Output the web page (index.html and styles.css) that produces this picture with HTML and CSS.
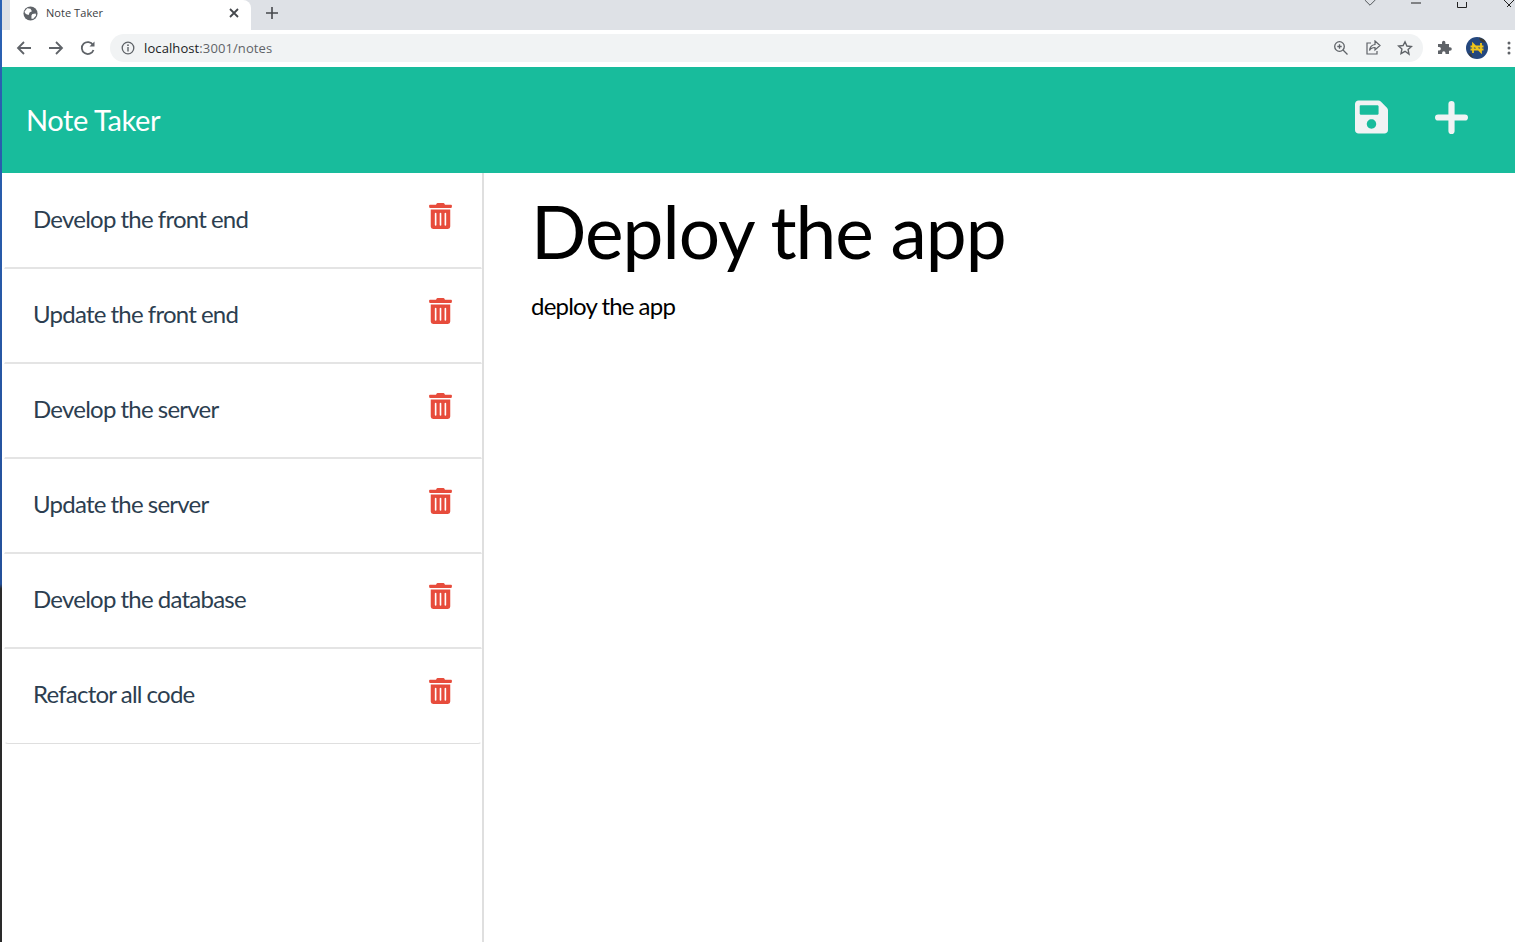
FILE: index.html
```html
<!DOCTYPE html>
<html lang="en">
<head>
<meta charset="utf-8">
<title>Note Taker</title>
<link rel="stylesheet" href="styles.css">
</head>
<body>
<div class="edge"></div>
<div class="window">
  <div class="tabstrip">
    <div class="tab">
      <svg class="favicon" viewBox="0 0 16 16"><circle cx="8" cy="8" r="7.500" fill="#5f6368"/><path d="M4.500 2.500l3.500.5 1.500 2.500-2.500 1.500-1 2.500-3-1L1.500 6zM10 8.500l3.500-.5.5 2-3 3.500-2 0 0-3.500z" fill="#fff"/></svg>
      <span class="tab-title">Note Taker</span>
      <svg class="tab-close" viewBox="0 0 10 10"><path d="M1 1l8 8M9 1l-8 8" stroke="#45484c" stroke-width="1.800" fill="none"/></svg>
    </div>
    <svg class="newtab" viewBox="0 0 12 12"><path d="M6 0v12M0 6h12" stroke="#45484c" stroke-width="1.600" fill="none"/></svg>
    <div class="winctl">
      <svg class="ctl-chev" viewBox="0 0 14 8"><path d="M1 0l6 6 6-6" stroke="#3c4043" fill="none"/></svg>
      <svg class="ctl-min" viewBox="0 0 10 6"><path d="M0 3h10" stroke="#222" fill="none"/></svg>
      <svg class="ctl-max" viewBox="0 0 10 6"><path d="M.5 0v5.500h9V0" stroke="#222" fill="none"/></svg>
      <svg class="ctl-close" viewBox="0 0 12 8"><path d="M1 0l7 7M11 0L4 7" stroke="#222" fill="none"/></svg>
    </div>
  </div>
  <div class="toolbar">
    <svg class="nav" viewBox="0 0 16 16"><path d="M15 8H2M8 2L2 8l6 6" stroke="#5f6368" stroke-width="1.800" fill="none"/></svg>
    <svg class="nav" viewBox="0 0 16 16"><path d="M1 8h13M8 2l6 6-6 6" stroke="#5f6368" stroke-width="1.800" fill="none"/></svg>
    <svg class="nav" viewBox="0 0 16 16"><path d="M13.500 10a6 6 0 1 1-.5-5" stroke="#5f6368" stroke-width="1.800" fill="none"/><path d="M14.500 1.500v5h-5z" fill="#5f6368"/></svg>
    <div class="omnibox">
      <svg class="info" viewBox="0 0 14 14"><circle cx="7" cy="7" r="5.800" stroke="#5f6368" stroke-width="1.300" fill="none"/><path d="M7 6v4.500" stroke="#5f6368" stroke-width="1.400"/><circle cx="7" cy="4.200" r=".9" fill="#5f6368"/></svg>
      <span class="url"><span class="url-host">localhost</span>:3001/notes</span>
      <span class="omni-fill"></span>
      <svg class="omni-icon" viewBox="0 0 16 16"><circle cx="6.500" cy="6.500" r="4.800" stroke="#5f6368" stroke-width="1.300" fill="none"/><path d="M10 10l4.500 4.500M4.300 6.500h4.400M6.500 4.300v4.400" stroke="#5f6368" stroke-width="1.300" fill="none"/></svg>
      <svg class="omni-icon" viewBox="0 0 16 16"><path d="M6 3H2v11h10v-3" stroke="#5f6368" stroke-width="1.200" fill="none"/><path d="M10 1l5 4.500-5 4.500V7.500c-3 0-4.500 1-5.500 3 .3-3.500 2-5.500 5.500-6z" stroke="#5f6368" stroke-width="1.200" fill="none"/></svg>
      <svg class="omni-icon" viewBox="0 0 16 16"><path d="M8 1.800l1.900 4.200 4.600.5-3.400 3.100.9 4.500L8 11.300 4 13.600l.9-4.500L1.500 6l4.600-.5z" stroke="#5f6368" stroke-width="1.400" fill="none"/></svg>
    </div>
    <svg class="ext" viewBox="0 0 16 16"><path d="M6 2.500a1.700 1.700 0 0 1 3.400 0V4h3.600v3.200h1a1.800 1.800 0 0 1 0 3.600h-1V14H9.500v-1a1.700 1.700 0 0 0-3.400 0v1H2v-3.500h1.200a1.700 1.700 0 0 0 0-3.400H2V4h4z" fill="#5f6368"/></svg>
    <svg class="avatar" viewBox="0 0 22 22"><circle cx="11" cy="11" r="11" fill="#24477e"/><path d="M13 0.500l5 2 2 3-3 0-3-2zM2 16l3 1 2 4-3-2z" fill="#3a3a34"/><path d="M7 16V7l8 8V6M4.500 9.500h13M4.500 12.500h13" stroke="#f0c419" stroke-width="1.800" fill="none"/></svg>
    <svg class="menu" viewBox="0 0 4 16"><circle cx="2" cy="3" r="1.500" fill="#5f6368"/><circle cx="2" cy="8" r="1.500" fill="#5f6368"/><circle cx="2" cy="13" r="1.500" fill="#5f6368"/></svg>
  </div>
  <header class="navbar">
    <a class="brand">Note Taker</a>
    <div class="nav-actions">
      <svg class="save-icon" viewBox="0 0 448 512"><path fill="#f1f3f4" d="M433.900 129.900l-83.900-83.900A48 48 0 0 0 316.100 32H48C21.500 32 0 53.500 0 80v352c0 26.500 21.500 48 48 48h352c26.500 0 48-21.500 48-48V163.900a48 48 0 0 0-14.100-34zM224 416c-35.300 0-64-28.700-64-64 0-35.300 28.700-64 64-64s64 28.700 64 64c0 35.300-28.700 64-64 64zm96-304.500V212c0 6.600-5.400 12-12 12H76c-6.600 0-12-5.400-12-12V108c0-6.600 5.400-12 12-12h228.500c3.200 0 6.200 1.300 8.500 3.500l3.500 3.500c2.200 2.200 3.500 5.300 3.500 8.500z"/></svg>
      <svg class="plus-icon" viewBox="0 0 32 32"><path d="M16 3v26M3 16h26" stroke="#f1f3f4" stroke-width="6" stroke-linecap="round" fill="none"/></svg>
    </div>
  </header>
  <main class="content">
    <aside class="sidebar">
      <ul class="notes">
        <li class="note"><span>Develop the front end</span><svg class="trash" viewBox="0 0 448 512"><path fill="#e74c3c" d="M32 464a48 48 0 0 0 48 48h288a48 48 0 0 0 48-48V128H32zm272-256a16 16 0 0 1 32 0v224a16 16 0 0 1-32 0zm-96 0a16 16 0 0 1 32 0v224a16 16 0 0 1-32 0zm-96 0a16 16 0 0 1 32 0v224a16 16 0 0 1-32 0zM432 32H312l-9.400-18.700A24 24 0 0 0 281.100 0H166.800a23.700 23.700 0 0 0-21.400 13.300L136 32H16A16 16 0 0 0 0 48v32a16 16 0 0 0 16 16h416a16 16 0 0 0 16-16V48a16 16 0 0 0-16-16z"/></svg></li>
        <li class="note"><span>Update the front end</span><svg class="trash" viewBox="0 0 448 512"><path fill="#e74c3c" d="M32 464a48 48 0 0 0 48 48h288a48 48 0 0 0 48-48V128H32zm272-256a16 16 0 0 1 32 0v224a16 16 0 0 1-32 0zm-96 0a16 16 0 0 1 32 0v224a16 16 0 0 1-32 0zm-96 0a16 16 0 0 1 32 0v224a16 16 0 0 1-32 0zM432 32H312l-9.400-18.700A24 24 0 0 0 281.100 0H166.800a23.700 23.700 0 0 0-21.400 13.300L136 32H16A16 16 0 0 0 0 48v32a16 16 0 0 0 16 16h416a16 16 0 0 0 16-16V48a16 16 0 0 0-16-16z"/></svg></li>
        <li class="note"><span>Develop the server</span><svg class="trash" viewBox="0 0 448 512"><path fill="#e74c3c" d="M32 464a48 48 0 0 0 48 48h288a48 48 0 0 0 48-48V128H32zm272-256a16 16 0 0 1 32 0v224a16 16 0 0 1-32 0zm-96 0a16 16 0 0 1 32 0v224a16 16 0 0 1-32 0zm-96 0a16 16 0 0 1 32 0v224a16 16 0 0 1-32 0zM432 32H312l-9.400-18.700A24 24 0 0 0 281.100 0H166.800a23.700 23.700 0 0 0-21.400 13.300L136 32H16A16 16 0 0 0 0 48v32a16 16 0 0 0 16 16h416a16 16 0 0 0 16-16V48a16 16 0 0 0-16-16z"/></svg></li>
        <li class="note"><span>Update the server</span><svg class="trash" viewBox="0 0 448 512"><path fill="#e74c3c" d="M32 464a48 48 0 0 0 48 48h288a48 48 0 0 0 48-48V128H32zm272-256a16 16 0 0 1 32 0v224a16 16 0 0 1-32 0zm-96 0a16 16 0 0 1 32 0v224a16 16 0 0 1-32 0zm-96 0a16 16 0 0 1 32 0v224a16 16 0 0 1-32 0zM432 32H312l-9.400-18.700A24 24 0 0 0 281.100 0H166.800a23.700 23.700 0 0 0-21.400 13.300L136 32H16A16 16 0 0 0 0 48v32a16 16 0 0 0 16 16h416a16 16 0 0 0 16-16V48a16 16 0 0 0-16-16z"/></svg></li>
        <li class="note"><span>Develop the database</span><svg class="trash" viewBox="0 0 448 512"><path fill="#e74c3c" d="M32 464a48 48 0 0 0 48 48h288a48 48 0 0 0 48-48V128H32zm272-256a16 16 0 0 1 32 0v224a16 16 0 0 1-32 0zm-96 0a16 16 0 0 1 32 0v224a16 16 0 0 1-32 0zm-96 0a16 16 0 0 1 32 0v224a16 16 0 0 1-32 0zM432 32H312l-9.400-18.700A24 24 0 0 0 281.100 0H166.800a23.700 23.700 0 0 0-21.400 13.300L136 32H16A16 16 0 0 0 0 48v32a16 16 0 0 0 16 16h416a16 16 0 0 0 16-16V48a16 16 0 0 0-16-16z"/></svg></li>
        <li class="note"><span>Refactor all code</span><svg class="trash" viewBox="0 0 448 512"><path fill="#e74c3c" d="M32 464a48 48 0 0 0 48 48h288a48 48 0 0 0 48-48V128H32zm272-256a16 16 0 0 1 32 0v224a16 16 0 0 1-32 0zm-96 0a16 16 0 0 1 32 0v224a16 16 0 0 1-32 0zm-96 0a16 16 0 0 1 32 0v224a16 16 0 0 1-32 0zM432 32H312l-9.400-18.700A24 24 0 0 0 281.100 0H166.800a23.700 23.700 0 0 0-21.400 13.300L136 32H16A16 16 0 0 0 0 48v32a16 16 0 0 0 16 16h416a16 16 0 0 0 16-16V48a16 16 0 0 0-16-16z"/></svg></li>
      </ul>
    </aside>
    <section class="editor">
      <h1 class="note-title">Deploy the app</h1>
      <p class="note-text">deploy the app</p>
    </section>
  </main>
</div>
</body>
</html>
```
FILE: styles.css
```css
* { box-sizing: border-box; }
html, body { margin: 0; height: 100%; overflow: hidden; }
body { display: flex; background: #fff; font-family: Lato, sans-serif; color: #212529; }
.edge { width: 2px; flex: none; background: linear-gradient(#2b62b4 0, #24509a 62%, #2a2a2a 62.5%, #2a2a2a 100%); }
.window { flex: 1; min-width: 0; display: flex; flex-direction: column; height: 942px; }

.tabstrip { height: 30px; flex: none; background: #dee1e6; display: flex; align-items: center; }
.tab { margin-left: 8px; width: 241px; height: 30px; background: #fff; border-top-right-radius: 8px; display: flex; align-items: center; padding: 0 10px 4px 13px; }
.favicon { width: 15px; height: 15px; flex: none; }
.tab-title { margin: 0 0 2px 8px; font: 11px "Open Sans", sans-serif; color: #3c4043; flex: 1; letter-spacing: .05px; }
.tab-close { width: 10px; height: 10px; flex: none; margin-right: 2px; }
.newtab { width: 12px; height: 12px; margin-left: 15px; margin-top: -4px; flex: none; }
.winctl { margin-left: auto; height: 30px; display: flex; align-items: flex-start; }
.ctl-chev { width: 12px; height: 7px; margin-right: 35px; }
.ctl-min { width: 10px; height: 6px; margin-right: 36px; }
.ctl-max { width: 10px; height: 6px; margin-right: 36px; margin-top: 2px; }
.ctl-close { width: 12px; height: 8px; }

.toolbar { height: 37px; flex: none; background: #fff; display: flex; align-items: center; padding-left: 14px; padding-bottom: 1px; }
.nav { width: 16px; height: 16px; flex: none; margin-right: 16px; }
.omnibox { margin-left: -2px; width: 1313px; height: 28px; border-radius: 14px; background: #f1f3f4; display: flex; align-items: center; padding: 0 10px 0 11px; flex: none; }
.info { width: 14px; height: 14px; flex: none; }
.url { margin-left: 9px; font: 13px "Open Sans", sans-serif; color: #5f6368; letter-spacing: .1px; }
.url-host { color: #202124; }
.omni-fill { flex: 1; }
.omni-icon { width: 16px; height: 16px; flex: none; margin-left: 16px; }
.ext { width: 16px; height: 16px; flex: none; margin-left: 13px; }
.avatar { width: 22px; height: 22px; flex: none; margin-left: 14px; }
.menu { width: 4px; height: 16px; flex: none; margin-left: 19px; }

.navbar { height: 106px; flex: none; background: #18bc9c; display: flex; align-items: center; justify-content: space-between; padding: 0 47px 0 24px; }
.brand { font-size: 29px; color: #fff; letter-spacing: -.4px; margin-bottom: 2px; }
.nav-actions { display: flex; align-items: center; gap: 47px; margin-bottom: 6px; }
.save-icon { width: 33px; height: 38px; flex: none; }
.plus-icon { width: 33px; height: 33px; flex: none; }

.content { flex: 1; min-height: 0; display: flex; }
.sidebar { width: 482px; flex: none; border-right: 2px solid #dfdfdf; padding: 1px 0 0 2px; }
.notes { list-style: none; margin: 0; padding: 0; }
.note { height: 95px; display: flex; justify-content: space-between; padding: 27px 29px 0 28px; font-size: 24px; line-height: 34px; color: #2c3e50; letter-spacing: -.76px; word-spacing: -.5px; border: 1px solid #fff; border-bottom: 2px solid #e4e4e4; }
.note:last-child { border-bottom: 1px solid #dfdfdf; border-bottom-left-radius: 4px; border-bottom-right-radius: 4px; }
.trash { width: 23px; height: 26px; flex: none; margin-top: 1px; }

.editor { flex: 1; padding: 0 0 0 47px; }
.note-title { margin: 16px 0 0; font-size: 73px; font-weight: 400; line-height: 84px; color: #000; letter-spacing: -1px; }
.note-text { margin: 18px 0 0; font-size: 24px; line-height: 30px; color: #000; letter-spacing: -.78px; word-spacing: -.5px; }
```
